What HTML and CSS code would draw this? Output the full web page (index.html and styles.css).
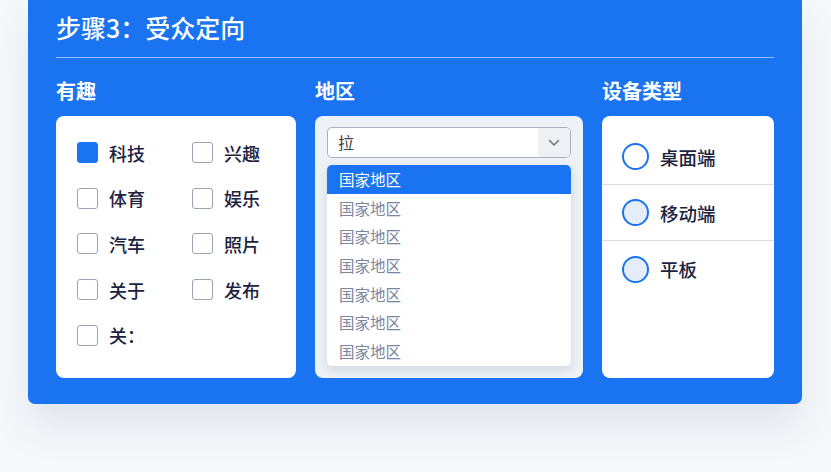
FILE: index.html
```html
<!DOCTYPE html>
<html lang="zh">
<head>
<meta charset="utf-8">
<link rel="stylesheet" href="styles.css">
</head>
<body>
<div class="panel">
  <h1 class="title">步骤3：受众定向</h1>
  <div class="divider"></div>
  <div class="cols">
    <section class="col col-interest">
      <h2 class="label">有趣</h2>
      <div class="card card-check">
        <label class="check"><span class="box on"></span>科技</label>
        <label class="check"><span class="box"></span>兴趣</label>
        <label class="check"><span class="box"></span>体育</label>
        <label class="check"><span class="box"></span>娱乐</label>
        <label class="check"><span class="box"></span>汽车</label>
        <label class="check"><span class="box"></span>照片</label>
        <label class="check"><span class="box"></span>关于</label>
        <label class="check"><span class="box"></span>发布</label>
        <label class="check"><span class="box"></span>关：</label>
      </div>
    </section>
    <section class="col col-region">
      <h2 class="label">地区</h2>
      <div class="card card-region">
        <div class="select">
          <span class="select-text">拉</span>
          <span class="select-arrow">
            <svg width="12" height="8" viewBox="0 0 12 8"><path d="M1.5 1.5 L6 6 L10.5 1.5" fill="none" stroke="#6b7385" stroke-width="1.5" stroke-linecap="round" stroke-linejoin="round"/></svg>
          </span>
        </div>
        <ul class="options">
          <li class="opt active">国家地区</li>
          <li class="opt">国家地区</li>
          <li class="opt">国家地区</li>
          <li class="opt">国家地区</li>
          <li class="opt">国家地区</li>
          <li class="opt">国家地区</li>
          <li class="opt">国家地区</li>
        </ul>
      </div>
    </section>
    <section class="col col-device">
      <h2 class="label">设备类型</h2>
      <div class="card card-radio">
        <label class="radio"><span class="circle"></span>桌面端</label>
        <label class="radio"><span class="circle tint"></span>移动端</label>
        <label class="radio last"><span class="circle tint"></span>平板</label>
      </div>
    </section>
  </div>
</div>
</body>
</html>
```

FILE: styles.css
```css
* { box-sizing: border-box; }
html, body { margin: 0; padding: 0; }
body {
  background: #f6f8fb;
  font-family: "Noto Sans CJK SC", "Noto Sans", sans-serif;
  width: 831px;
  height: 472px;
  overflow: hidden;
  padding: 0 29px 0 28px;
}
.panel {
  background: #1a73f0;
  border-radius: 0 0 7px 7px;
  padding: 9px 28px 26px 28px;
  box-shadow: 0 22px 40px rgba(40, 60, 100, 0.10);
}
.title {
  margin: 0;
  color: #fff;
  font-size: 25px;
  font-weight: 500;
  line-height: 36px;
  height: 36px;
}
.divider {
  margin-top: 12px;
  height: 1px;
  background: rgba(255, 255, 255, 0.55);
}
.cols {
  display: grid;
  grid-template-columns: 240px 268px 172px;
  column-gap: 19px;
  margin-top: 19px;
}
.label {
  margin: 0 0 11px 0;
  color: #fff;
  font-size: 20px;
  font-weight: 700;
  line-height: 28px;
  height: 28px;
}
.card {
  background: #fff;
  border-radius: 8px;
  height: 262px;
}
.card-check {
  display: grid;
  grid-template-columns: 115px 1fr;
  grid-auto-rows: 45.6px;
  padding: 14px 10px 0 21px;
  align-items: center;
}
.check {
  display: flex;
  align-items: center;
  gap: 11px;
  font-size: 18px;
  font-weight: 500;
  color: #1c2340;
}
.box {
  width: 21px;
  height: 21px;
  border: 1.5px solid #9aa2b3;
  border-radius: 3px;
  background: #fff;
}
.box.on {
  background: #1a73f0;
  border-color: #1a73f0;
}
.card-region {
  background: #eef1f6;
  padding: 11px 12px 12px 12px;
}
.select {
  display: flex;
  height: 31px;
  background: #fff;
  border: 1px solid #a9afbc;
  border-radius: 5px;
  overflow: hidden;
}
.select-text {
  flex: 1;
  padding-left: 10px;
  font-size: 16px;
  line-height: 29px;
  color: #3a4050;
}
.select-arrow {
  width: 32px;
  background: #eef0f4;
  display: flex;
  align-items: center;
  justify-content: center;
}
.options {
  list-style: none;
  margin: 7px 0 0 0;
  padding: 0;
  background: #fff;
  border-radius: 5px;
  overflow: hidden;
  box-shadow: 0 3px 10px rgba(50, 70, 110, 0.16);
}
.opt {
  height: 28.7px;
  line-height: 28.7px;
  padding-left: 12px;
  font-size: 15.5px;
  color: #7a86a0;
}
.opt.active {
  background: #1a73f0;
  color: #fff;
}
.card-radio {
  padding-top: 13px;
}
.radio {
  display: flex;
  align-items: center;
  gap: 11px;
  height: 56px;
  padding-left: 20px;
  border-bottom: 1px solid #d9dce5;
  font-size: 18.5px;
  font-weight: 500;
  color: #1c2340;
}
.radio.last { border-bottom: none; }
.circle {
  width: 27px;
  height: 27px;
  border: 2px solid #1a73f0;
  border-radius: 50%;
  background: #fff;
}
.circle.tint { background: #e5edfa; }
```
